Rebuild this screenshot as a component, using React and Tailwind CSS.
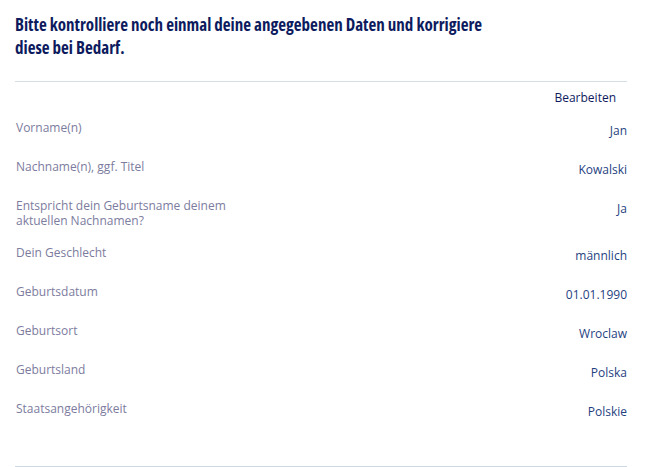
const rows = [
    { label: "Vorname(n)", value: "Jan" },
    { label: "Nachname(n), ggf. Titel", value: "Kowalski" },
    { label: "Entspricht dein Geburtsname deinem aktuellen Nachnamen?", value: "Ja" },
    { label: "Dein Geschlecht", value: "männlich" },
    { label: "Geburtsdatum", value: "01.01.1990" },
    { label: "Geburtsort", value: "Wroclaw" },
    { label: "Geburtsland", value: "Polska" },
    { label: "Staatsangehörigkeit", value: "Polskie" },
];

export default function App() {
    return (
        <div className="min-h-[467px] bg-white pl-[15px] pr-[27px] pt-[13px] font-['Open_Sans',sans-serif]">
            <h2 className="max-w-[500px] text-[17px] font-bold leading-[23px] text-[#0d1b5e] [font-stretch:82%]">
                Bitte kontrolliere noch einmal deine angegebenen Daten und korrigiere diese bei Bedarf.
            </h2>

            <div className="mt-[22px] border-t border-[#d5dde5]">
                <div className="flex justify-end pr-[11px] pt-[7px]">
                    <button type="button" className="text-[12px] leading-[18px] text-[#0d1b5e]">
                        Bearbeiten
                    </button>
                </div>

                <dl className="pb-[35px] pt-[4px]">
                    {rows.map((row) => (
                        <div key={row.label} className="flex items-start justify-between py-[8.5px]">
                            <dt className="w-[220px] pl-[1px] text-[12px] leading-[15px] text-[#7c7c9e]">{row.label}</dt>
                            <dd className="text-right text-[12px] leading-[22px] text-[#1f3f7f]">{row.value}</dd>
                        </div>
                    ))}
                </dl>

                <div className="border-t border-[#cdd8e3]" />
            </div>
        </div>
    );
}
